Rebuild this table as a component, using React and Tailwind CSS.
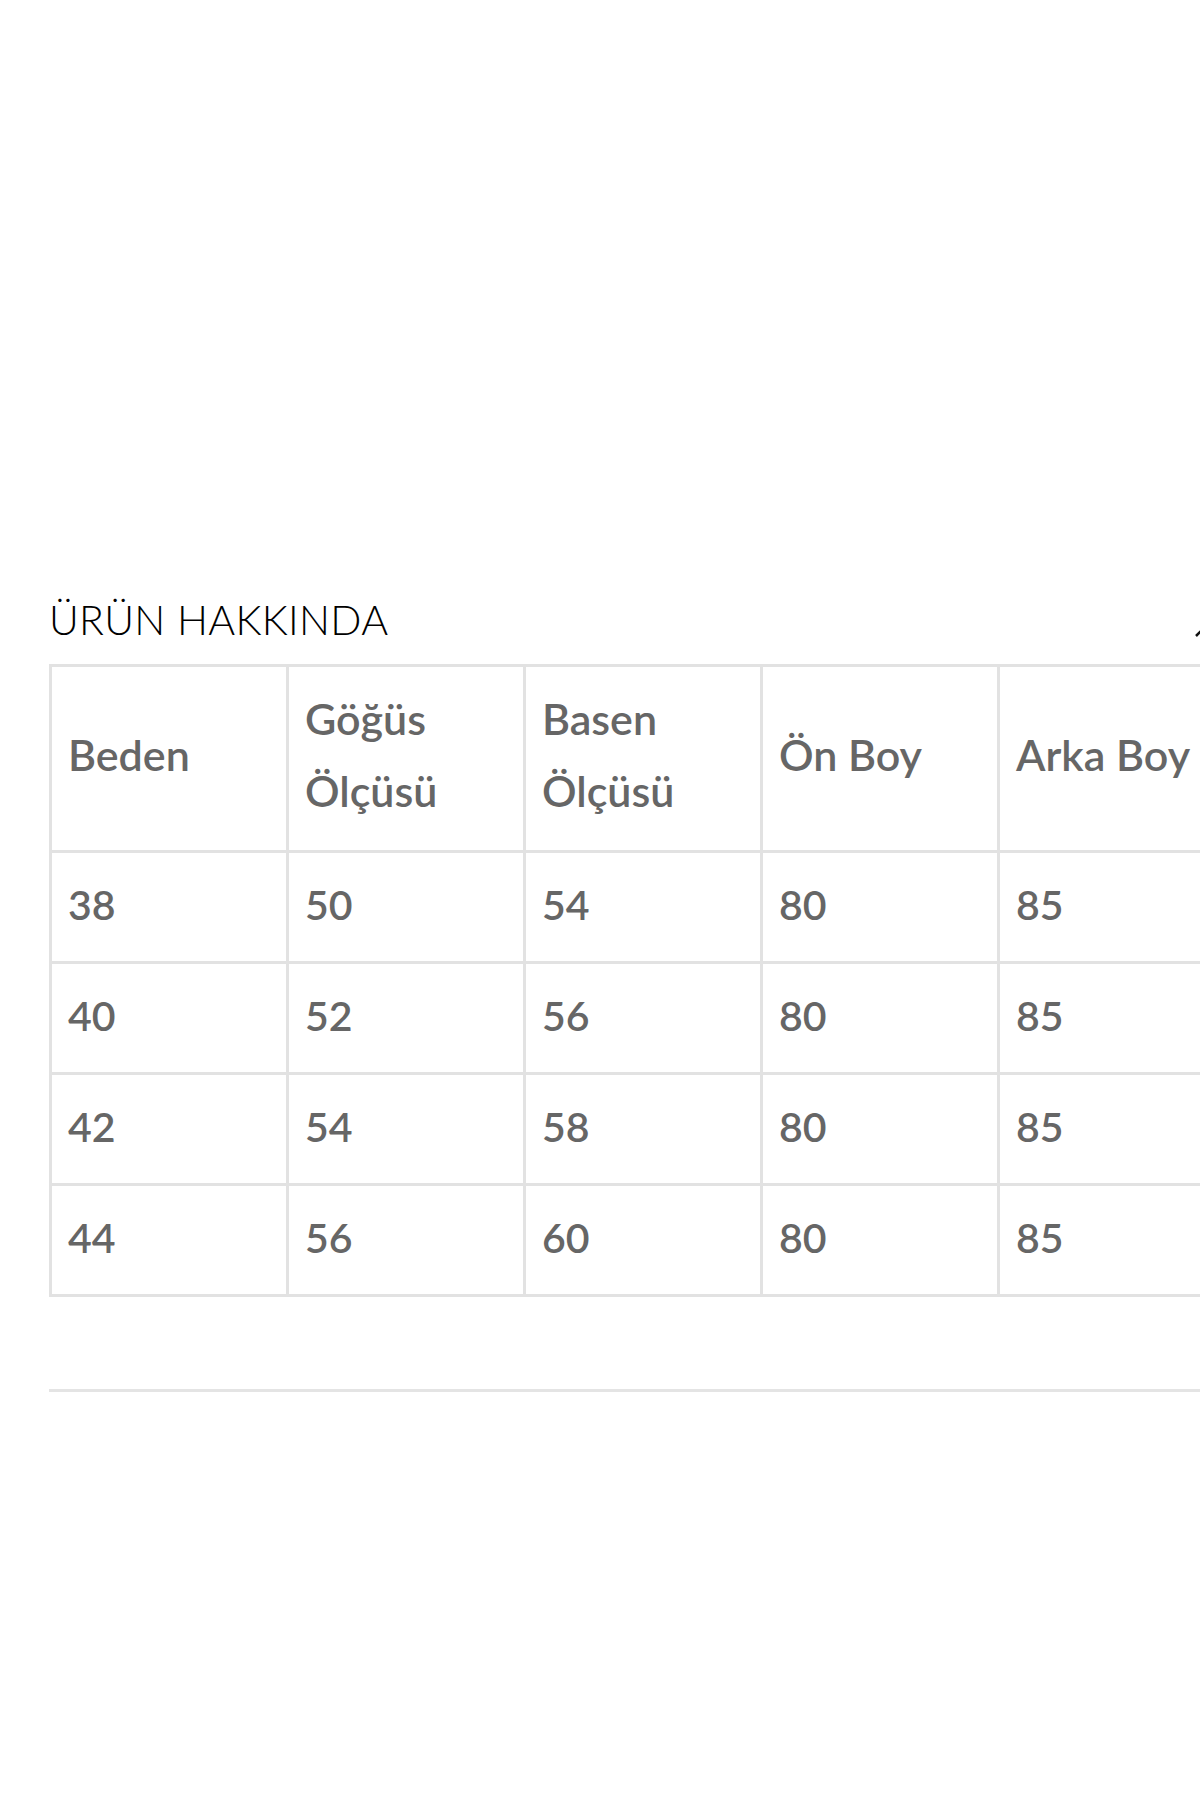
const headers = [["Beden"], ["Göğüs", "Ölçüsü"], ["Basen", "Ölçüsü"], ["Ön Boy"], ["Arka Boy"]];

const rows = [
  ["38", "50", "54", "80", "85"],
  ["40", "52", "56", "80", "85"],
  ["42", "54", "58", "80", "85"],
  ["44", "56", "60", "80", "85"],
];

const App = () => {
  return (
    <div className="w-[1200px] h-[1800px] overflow-hidden bg-white font-['Lato',sans-serif]">
      <div className="pt-[592px] pl-[49px]">
        <div className="flex items-center justify-between h-[54px] w-[1151px]">
          <h2 className="text-[41px] font-light text-black leading-none tracking-[0.3px]">ÜRÜN HAKKINDA</h2>
          <svg width="20" height="20" viewBox="0 0 20 20" className="mt-[26px] -mr-[14px]">
            <path d="M2 14 L10 6 L18 14" fill="none" stroke="#111" strokeWidth="2.5" />
          </svg>
        </div>
        <div className="mt-[18px] w-[1151px] overflow-hidden">
          <table className="border-collapse table-fixed w-[1185px] text-[#666] font-semibold">
            <thead>
              <tr className="h-[186px]">
                {headers.map((h, i) => (
                  <th key={i} className="w-[237px] border-[3px] border-[#e2e2e2] pl-[16px] pb-[8px] text-left align-middle font-semibold">
                    {h.map((line) => (
                      <div key={line} className="text-[43px] leading-[72px] whitespace-nowrap">{line}</div>
                    ))}
                  </th>
                ))}
              </tr>
            </thead>
            <tbody>
              {rows.map((r, ri) => (
                <tr key={ri} className="h-[111px]">
                  {r.map((c, ci) => (
                    <td key={ci} className="border-[3px] border-[#e2e2e2] pl-[16px] pb-[6px] text-[41px] leading-none align-middle">{c}</td>
                  ))}
                </tr>
              ))}
            </tbody>
          </table>
        </div>
        <div className="mt-[92px] h-[3px] w-[1151px] bg-[#e4e4e4]" />
      </div>
    </div>
  );
};

export default App;
